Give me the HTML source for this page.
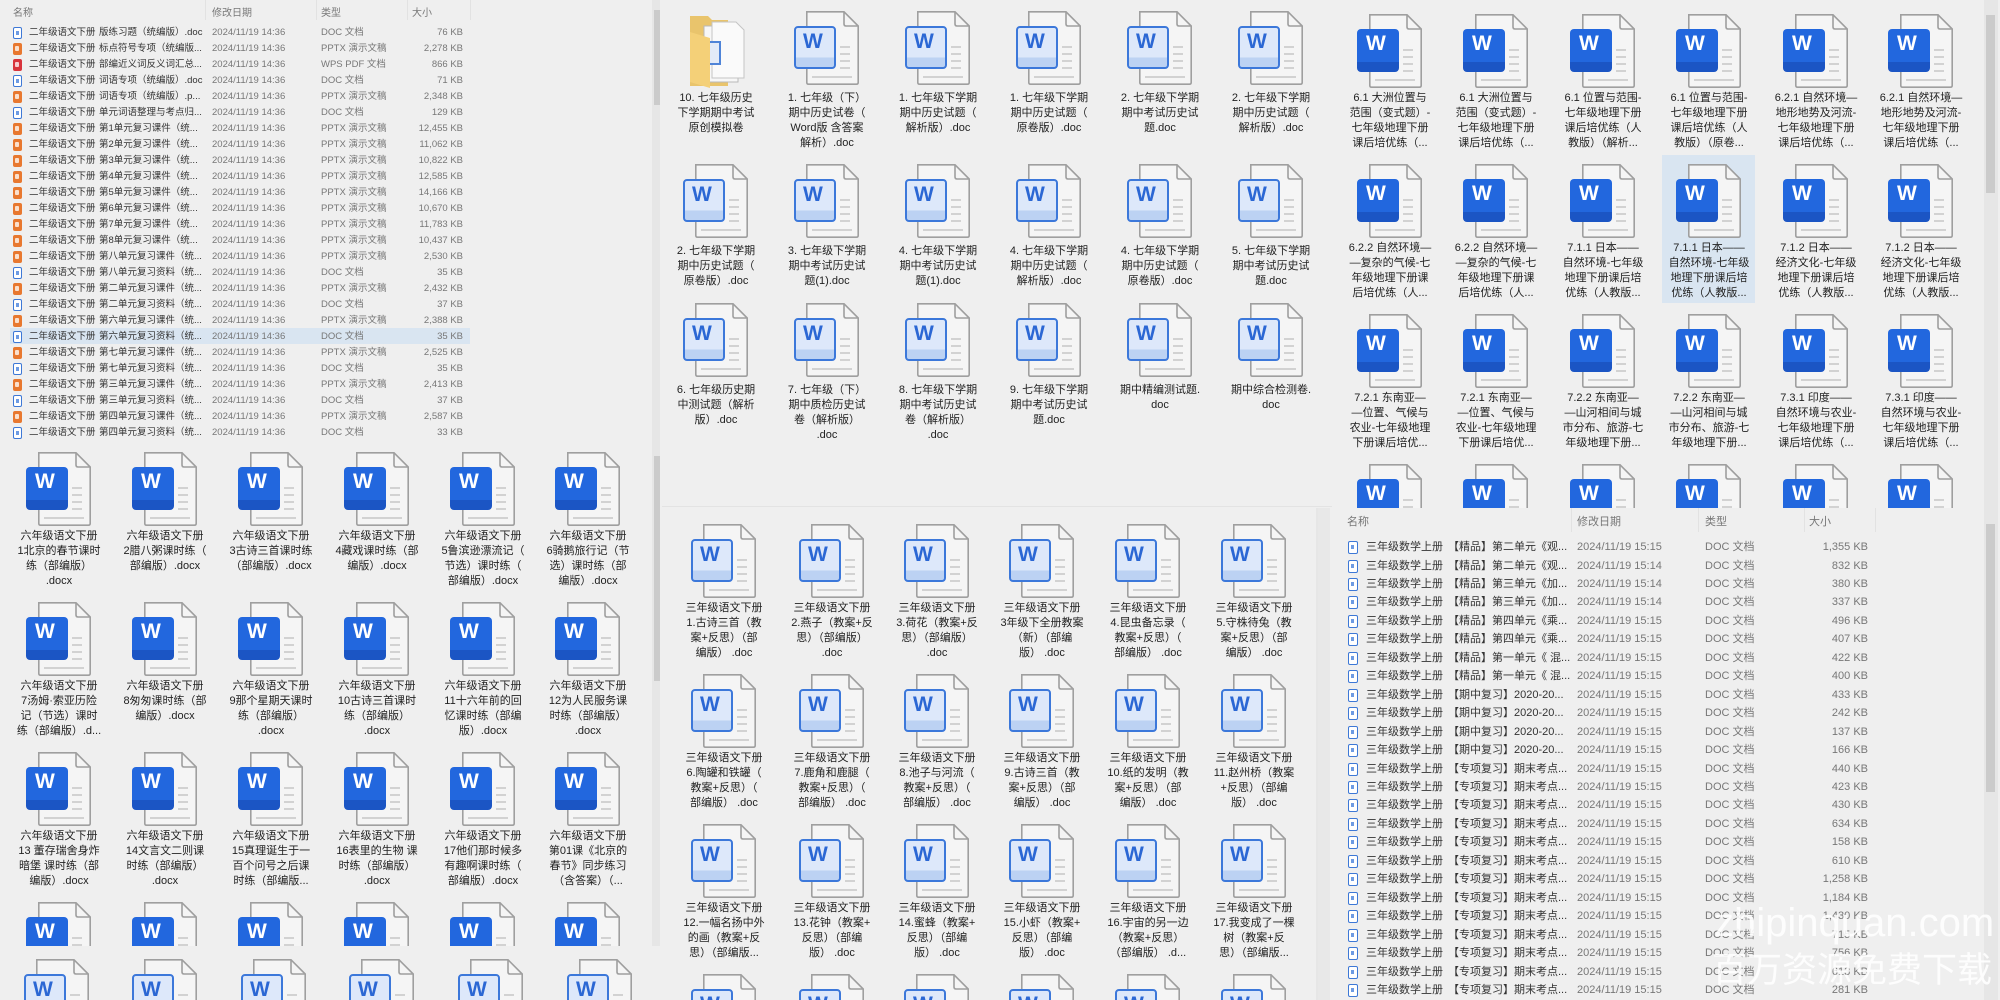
<!DOCTYPE html>
<html><head><meta charset="utf-8">
<style>
*{margin:0;padding:0;box-sizing:border-box}
html{width:2000px;height:1000px;overflow:hidden}
body{width:2000px;height:1000px;overflow:hidden;background:#efefef;position:relative;font-family:"Liberation Sans","Noto Sans CJK SC",sans-serif}
.p{position:absolute;overflow:hidden;background:#efefef}
.t{position:absolute;width:110px;height:140px}
.ic{position:absolute;left:22px;top:0;width:66px;height:76px}
.ic svg{position:absolute;left:0;top:0}
.bx{position:absolute;left:0;top:16px;width:42px;height:43px;border-radius:4px;background:linear-gradient(#2267de 0 77%,#1b55c4 77%);color:#fff;font:bold 21px/30px "Liberation Sans",sans-serif;padding-left:9px}
.bo .bx{background:linear-gradient(#dde8fa 0 76%,#bcd2f3 76%);border:2.5px solid #3c78da;color:#2b67d4;padding-left:7px;line-height:27px}
.lb{position:absolute;top:78px;left:-5px;width:120px;text-align:center;font-size:11px;line-height:15px;color:#222;white-space:nowrap;font-family:"Liberation Sans","Noto Sans CJK SC",sans-serif}
.sel{position:absolute;background:#d9e5f1}
.r{position:absolute;left:0;height:16px;width:660px;font-size:9.5px;line-height:16px;white-space:nowrap;color:#333}
.r span{position:absolute;top:0}
.r .d,.r .y{color:#777}
.r .s{text-align:right;color:#777}
.i{position:absolute;width:9px;height:12px;border-radius:2px}
.idoc{border:1px solid #3d78d6;background:#fff}
.idoc:after{content:"";position:absolute;left:2px;top:3px;width:3px;height:4px;background:#6d9be3}
.ippt{background:#e8782f}
.ippt:after{content:"";position:absolute;left:2px;top:3px;width:4px;height:5px;background:#fbe0cc;border-radius:1px}
.ipdf{background:#d8343c}
.ipdf:after{content:"";position:absolute;left:2px;top:3px;width:4px;height:5px;background:#f7cdd0;border-radius:1px}
.h{position:absolute;font-size:10px;color:#777}
.vs{position:absolute;width:1px;background:#e2e2e2}
.sb{position:absolute;background:#e6e6e6}
.th{position:absolute;background:#cbcbcb}
.r2{position:absolute;left:0;width:640px;height:18px;font-size:11px;line-height:18px;white-space:nowrap;color:#333}
.r2 span{position:absolute;top:0}
.r2 .d,.r2 .y,.r2 .s{color:#777}
.r2 .s{text-align:right}
</style></head><body>
<svg width="0" height="0" style="position:absolute">
<defs>
<symbol id="pg" viewBox="0 0 66 76">
<path d="M12.8 1.8H50L64.2 16V72.5Q64.2 74.2 62.5 74.2H14.5Q12.8 74.2 12.8 72.5Z" fill="#f5f5f5" stroke="#9f9f9f" stroke-width="1.6"/>
<path d="M50 1.8V14Q50 16 52 16H64.2" fill="none" stroke="#9f9f9f" stroke-width="1.6"/>
<rect x="46" y="36" width="10" height="2" fill="#d2d2d2"/>
<rect x="46" y="43" width="10" height="2" fill="#d2d2d2"/>
<rect x="46" y="50" width="10" height="2" fill="#d2d2d2"/>
<rect x="46" y="57" width="10" height="2" fill="#d2d2d2"/>
<rect x="18" y="66" width="40" height="2" fill="#d2d2d2"/>
</symbol>
</defs>
</svg>

<!-- ============ TOP-LEFT LIST ============ -->
<div class="p" style="left:0;top:0;width:660px;height:442px">
<div class="h" style="left:13px;top:4px">名称</div>
<div class="h" style="left:107px;top:-6px;font-size:9px">^</div>
<div class="h" style="left:212px;top:4px">修改日期</div>
<div class="h" style="left:321px;top:4px">类型</div>
<div class="h" style="left:412px;top:4px">大小</div>
<div class="vs" style="left:205px;top:0;height:20px"></div>
<div class="vs" style="left:316px;top:0;height:20px"></div>
<div class="vs" style="left:407px;top:0;height:20px"></div>
<div class="vs" style="left:470px;top:0;height:20px"></div>
<div class="sel" style="left:10px;top:328px;width:460px;height:16px"></div>
<div class="r" style="top:25px"><i class="i idoc" style="left:13px;top:2px"></i><span style="left:29px">二年级语文下册</span><span style="left:99px">版练习题（统编版）.doc</span><span class="d" style="left:212px">2024/11/19 14:36</span><span class="y" style="left:321px">DOC 文档</span><span class="s" style="left:400px;width:63px">76 KB</span></div>
<div class="r" style="top:41px"><i class="i ippt" style="left:13px;top:2px"></i><span style="left:29px">二年级语文下册</span><span style="left:99px">标点符号专项（统编版...</span><span class="d" style="left:212px">2024/11/19 14:36</span><span class="y" style="left:321px">PPTX 演示文稿</span><span class="s" style="left:400px;width:63px">2,278 KB</span></div>
<div class="r" style="top:57px"><i class="i ipdf" style="left:13px;top:2px"></i><span style="left:29px">二年级语文下册</span><span style="left:99px">部编近义词反义词汇总...</span><span class="d" style="left:212px">2024/11/19 14:36</span><span class="y" style="left:321px">WPS PDF 文档</span><span class="s" style="left:400px;width:63px">866 KB</span></div>
<div class="r" style="top:73px"><i class="i idoc" style="left:13px;top:2px"></i><span style="left:29px">二年级语文下册</span><span style="left:99px">词语专项（统编版）.doc</span><span class="d" style="left:212px">2024/11/19 14:36</span><span class="y" style="left:321px">DOC 文档</span><span class="s" style="left:400px;width:63px">71 KB</span></div>
<div class="r" style="top:89px"><i class="i ippt" style="left:13px;top:2px"></i><span style="left:29px">二年级语文下册</span><span style="left:99px">词语专项（统编版）.p...</span><span class="d" style="left:212px">2024/11/19 14:36</span><span class="y" style="left:321px">PPTX 演示文稿</span><span class="s" style="left:400px;width:63px">2,348 KB</span></div>
<div class="r" style="top:105px"><i class="i idoc" style="left:13px;top:2px"></i><span style="left:29px">二年级语文下册</span><span style="left:99px">单元词语整理与考点归...</span><span class="d" style="left:212px">2024/11/19 14:36</span><span class="y" style="left:321px">DOC 文档</span><span class="s" style="left:400px;width:63px">129 KB</span></div>
<div class="r" style="top:121px"><i class="i ippt" style="left:13px;top:2px"></i><span style="left:29px">二年级语文下册</span><span style="left:99px">第1单元复习课件（统...</span><span class="d" style="left:212px">2024/11/19 14:36</span><span class="y" style="left:321px">PPTX 演示文稿</span><span class="s" style="left:400px;width:63px">12,455 KB</span></div>
<div class="r" style="top:137px"><i class="i ippt" style="left:13px;top:2px"></i><span style="left:29px">二年级语文下册</span><span style="left:99px">第2单元复习课件（统...</span><span class="d" style="left:212px">2024/11/19 14:36</span><span class="y" style="left:321px">PPTX 演示文稿</span><span class="s" style="left:400px;width:63px">11,062 KB</span></div>
<div class="r" style="top:153px"><i class="i ippt" style="left:13px;top:2px"></i><span style="left:29px">二年级语文下册</span><span style="left:99px">第3单元复习课件（统...</span><span class="d" style="left:212px">2024/11/19 14:36</span><span class="y" style="left:321px">PPTX 演示文稿</span><span class="s" style="left:400px;width:63px">10,822 KB</span></div>
<div class="r" style="top:169px"><i class="i ippt" style="left:13px;top:2px"></i><span style="left:29px">二年级语文下册</span><span style="left:99px">第4单元复习课件（统...</span><span class="d" style="left:212px">2024/11/19 14:36</span><span class="y" style="left:321px">PPTX 演示文稿</span><span class="s" style="left:400px;width:63px">12,585 KB</span></div>
<div class="r" style="top:185px"><i class="i ippt" style="left:13px;top:2px"></i><span style="left:29px">二年级语文下册</span><span style="left:99px">第5单元复习课件（统...</span><span class="d" style="left:212px">2024/11/19 14:36</span><span class="y" style="left:321px">PPTX 演示文稿</span><span class="s" style="left:400px;width:63px">14,166 KB</span></div>
<div class="r" style="top:201px"><i class="i ippt" style="left:13px;top:2px"></i><span style="left:29px">二年级语文下册</span><span style="left:99px">第6单元复习课件（统...</span><span class="d" style="left:212px">2024/11/19 14:36</span><span class="y" style="left:321px">PPTX 演示文稿</span><span class="s" style="left:400px;width:63px">10,670 KB</span></div>
<div class="r" style="top:217px"><i class="i ippt" style="left:13px;top:2px"></i><span style="left:29px">二年级语文下册</span><span style="left:99px">第7单元复习课件（统...</span><span class="d" style="left:212px">2024/11/19 14:36</span><span class="y" style="left:321px">PPTX 演示文稿</span><span class="s" style="left:400px;width:63px">11,783 KB</span></div>
<div class="r" style="top:233px"><i class="i ippt" style="left:13px;top:2px"></i><span style="left:29px">二年级语文下册</span><span style="left:99px">第8单元复习课件（统...</span><span class="d" style="left:212px">2024/11/19 14:36</span><span class="y" style="left:321px">PPTX 演示文稿</span><span class="s" style="left:400px;width:63px">10,437 KB</span></div>
<div class="r" style="top:249px"><i class="i ippt" style="left:13px;top:2px"></i><span style="left:29px">二年级语文下册</span><span style="left:99px">第八单元复习课件（统...</span><span class="d" style="left:212px">2024/11/19 14:36</span><span class="y" style="left:321px">PPTX 演示文稿</span><span class="s" style="left:400px;width:63px">2,530 KB</span></div>
<div class="r" style="top:265px"><i class="i idoc" style="left:13px;top:2px"></i><span style="left:29px">二年级语文下册</span><span style="left:99px">第八单元复习资料（统...</span><span class="d" style="left:212px">2024/11/19 14:36</span><span class="y" style="left:321px">DOC 文档</span><span class="s" style="left:400px;width:63px">35 KB</span></div>
<div class="r" style="top:281px"><i class="i ippt" style="left:13px;top:2px"></i><span style="left:29px">二年级语文下册</span><span style="left:99px">第二单元复习课件（统...</span><span class="d" style="left:212px">2024/11/19 14:36</span><span class="y" style="left:321px">PPTX 演示文稿</span><span class="s" style="left:400px;width:63px">2,432 KB</span></div>
<div class="r" style="top:297px"><i class="i idoc" style="left:13px;top:2px"></i><span style="left:29px">二年级语文下册</span><span style="left:99px">第二单元复习资料（统...</span><span class="d" style="left:212px">2024/11/19 14:36</span><span class="y" style="left:321px">DOC 文档</span><span class="s" style="left:400px;width:63px">37 KB</span></div>
<div class="r" style="top:313px"><i class="i ippt" style="left:13px;top:2px"></i><span style="left:29px">二年级语文下册</span><span style="left:99px">第六单元复习课件（统...</span><span class="d" style="left:212px">2024/11/19 14:36</span><span class="y" style="left:321px">PPTX 演示文稿</span><span class="s" style="left:400px;width:63px">2,388 KB</span></div>
<div class="r" style="top:329px"><i class="i idoc" style="left:13px;top:2px"></i><span style="left:29px">二年级语文下册</span><span style="left:99px">第六单元复习资料（统...</span><span class="d" style="left:212px">2024/11/19 14:36</span><span class="y" style="left:321px">DOC 文档</span><span class="s" style="left:400px;width:63px">35 KB</span></div>
<div class="r" style="top:345px"><i class="i ippt" style="left:13px;top:2px"></i><span style="left:29px">二年级语文下册</span><span style="left:99px">第七单元复习课件（统...</span><span class="d" style="left:212px">2024/11/19 14:36</span><span class="y" style="left:321px">PPTX 演示文稿</span><span class="s" style="left:400px;width:63px">2,525 KB</span></div>
<div class="r" style="top:361px"><i class="i idoc" style="left:13px;top:2px"></i><span style="left:29px">二年级语文下册</span><span style="left:99px">第七单元复习资料（统...</span><span class="d" style="left:212px">2024/11/19 14:36</span><span class="y" style="left:321px">DOC 文档</span><span class="s" style="left:400px;width:63px">35 KB</span></div>
<div class="r" style="top:377px"><i class="i ippt" style="left:13px;top:2px"></i><span style="left:29px">二年级语文下册</span><span style="left:99px">第三单元复习课件（统...</span><span class="d" style="left:212px">2024/11/19 14:36</span><span class="y" style="left:321px">PPTX 演示文稿</span><span class="s" style="left:400px;width:63px">2,413 KB</span></div>
<div class="r" style="top:393px"><i class="i idoc" style="left:13px;top:2px"></i><span style="left:29px">二年级语文下册</span><span style="left:99px">第三单元复习资料（统...</span><span class="d" style="left:212px">2024/11/19 14:36</span><span class="y" style="left:321px">DOC 文档</span><span class="s" style="left:400px;width:63px">37 KB</span></div>
<div class="r" style="top:409px"><i class="i ippt" style="left:13px;top:2px"></i><span style="left:29px">二年级语文下册</span><span style="left:99px">第四单元复习课件（统...</span><span class="d" style="left:212px">2024/11/19 14:36</span><span class="y" style="left:321px">PPTX 演示文稿</span><span class="s" style="left:400px;width:63px">2,587 KB</span></div>
<div class="r" style="top:425px"><i class="i idoc" style="left:13px;top:2px"></i><span style="left:29px">二年级语文下册</span><span style="left:99px">第四单元复习资料（统...</span><span class="d" style="left:212px">2024/11/19 14:36</span><span class="y" style="left:321px">DOC 文档</span><span class="s" style="left:400px;width:63px">33 KB</span></div>
<div class="sb" style="left:652px;top:0;width:10px;height:442px"></div>
<div class="th" style="left:654px;top:10px;width:6px;height:95px"></div>
</div>

<!-- ============ BOTTOM-LEFT ICONS ============ -->
<div class="p" style="left:0;top:442px;width:660px;height:504px">
<div class="t" style="left:4px;top:9px"><div class="ic"><svg width="66" height="76"><use href="#pg"/></svg><div class="bx">W</div></div><div class="lb">六年级语文下册<br>1北京的春节课时<br>练（部编版）<br>.docx</div></div>
<div class="t" style="left:110px;top:9px"><div class="ic"><svg width="66" height="76"><use href="#pg"/></svg><div class="bx">W</div></div><div class="lb">六年级语文下册<br>2腊八粥课时练（<br>部编版）.docx</div></div>
<div class="t" style="left:216px;top:9px"><div class="ic"><svg width="66" height="76"><use href="#pg"/></svg><div class="bx">W</div></div><div class="lb">六年级语文下册<br>3古诗三首课时练<br>（部编版）.docx</div></div>
<div class="t" style="left:322px;top:9px"><div class="ic"><svg width="66" height="76"><use href="#pg"/></svg><div class="bx">W</div></div><div class="lb">六年级语文下册<br>4藏戏课时练（部<br>编版）.docx</div></div>
<div class="t" style="left:428px;top:9px"><div class="ic"><svg width="66" height="76"><use href="#pg"/></svg><div class="bx">W</div></div><div class="lb">六年级语文下册<br>5鲁滨逊漂流记（<br>节选）课时练（<br>部编版）.docx</div></div>
<div class="t" style="left:533px;top:9px"><div class="ic"><svg width="66" height="76"><use href="#pg"/></svg><div class="bx">W</div></div><div class="lb">六年级语文下册<br>6骑鹅旅行记（节<br>选）课时练（部<br>编版）.docx</div></div>

<div class="t" style="left:4px;top:159px"><div class="ic"><svg width="66" height="76"><use href="#pg"/></svg><div class="bx">W</div></div><div class="lb">六年级语文下册<br>7汤姆·索亚历险<br>记（节选）课时<br>练（部编版）.d...</div></div>
<div class="t" style="left:110px;top:159px"><div class="ic"><svg width="66" height="76"><use href="#pg"/></svg><div class="bx">W</div></div><div class="lb">六年级语文下册<br>8匆匆课时练（部<br>编版）.docx</div></div>
<div class="t" style="left:216px;top:159px"><div class="ic"><svg width="66" height="76"><use href="#pg"/></svg><div class="bx">W</div></div><div class="lb">六年级语文下册<br>9那个星期天课时<br>练（部编版）<br>.docx</div></div>
<div class="t" style="left:322px;top:159px"><div class="ic"><svg width="66" height="76"><use href="#pg"/></svg><div class="bx">W</div></div><div class="lb">六年级语文下册<br>10古诗三首课时<br>练（部编版）<br>.docx</div></div>
<div class="t" style="left:428px;top:159px"><div class="ic"><svg width="66" height="76"><use href="#pg"/></svg><div class="bx">W</div></div><div class="lb">六年级语文下册<br>11十六年前的回<br>忆课时练（部编<br>版）.docx</div></div>
<div class="t" style="left:533px;top:159px"><div class="ic"><svg width="66" height="76"><use href="#pg"/></svg><div class="bx">W</div></div><div class="lb">六年级语文下册<br>12为人民服务课<br>时练（部编版）<br>.docx</div></div>

<div class="t" style="left:4px;top:309px"><div class="ic"><svg width="66" height="76"><use href="#pg"/></svg><div class="bx">W</div></div><div class="lb">六年级语文下册<br>13 董存瑞舍身炸<br>暗堡 课时练（部<br>编版）.docx</div></div>
<div class="t" style="left:110px;top:309px"><div class="ic"><svg width="66" height="76"><use href="#pg"/></svg><div class="bx">W</div></div><div class="lb">六年级语文下册<br>14文言文二则课<br>时练（部编版）<br>.docx</div></div>
<div class="t" style="left:216px;top:309px"><div class="ic"><svg width="66" height="76"><use href="#pg"/></svg><div class="bx">W</div></div><div class="lb">六年级语文下册<br>15真理诞生于一<br>百个问号之后课<br>时练（部编版...</div></div>
<div class="t" style="left:322px;top:309px"><div class="ic"><svg width="66" height="76"><use href="#pg"/></svg><div class="bx">W</div></div><div class="lb">六年级语文下册<br>16表里的生物 课<br>时练（部编版）<br>.docx</div></div>
<div class="t" style="left:428px;top:309px"><div class="ic"><svg width="66" height="76"><use href="#pg"/></svg><div class="bx">W</div></div><div class="lb">六年级语文下册<br>17他们那时候多<br>有趣啊课时练（<br>部编版）.docx</div></div>
<div class="t" style="left:533px;top:309px"><div class="ic"><svg width="66" height="76"><use href="#pg"/></svg><div class="bx">W</div></div><div class="lb">六年级语文下册<br>第01课《北京的<br>春节》同步练习<br>（含答案）（...</div></div>

<div class="t" style="left:4px;top:459px;height:45px"><div class="ic"><svg width="66" height="76"><use href="#pg"/></svg><div class="bx">W</div></div></div>
<div class="t" style="left:110px;top:459px;height:45px"><div class="ic"><svg width="66" height="76"><use href="#pg"/></svg><div class="bx">W</div></div></div>
<div class="t" style="left:216px;top:459px;height:45px"><div class="ic"><svg width="66" height="76"><use href="#pg"/></svg><div class="bx">W</div></div></div>
<div class="t" style="left:322px;top:459px;height:45px"><div class="ic"><svg width="66" height="76"><use href="#pg"/></svg><div class="bx">W</div></div></div>
<div class="t" style="left:428px;top:459px;height:45px"><div class="ic"><svg width="66" height="76"><use href="#pg"/></svg><div class="bx">W</div></div></div>
<div class="t" style="left:533px;top:459px;height:45px"><div class="ic"><svg width="66" height="76"><use href="#pg"/></svg><div class="bx">W</div></div></div>
<div class="sb" style="left:652px;top:0;width:10px;height:504px"></div>
<div class="th" style="left:654px;top:14px;width:6px;height:225px"></div>
</div>
<div class="p" style="left:0;top:946px;width:660px;height:54px">
<div class="t bo" style="left:2px;top:12px;height:42px"><div class="ic"><svg width="66" height="76"><use href="#pg"/></svg><div class="bx">W</div></div></div>
<div class="t bo" style="left:110px;top:12px;height:42px"><div class="ic"><svg width="66" height="76"><use href="#pg"/></svg><div class="bx">W</div></div></div>
<div class="t bo" style="left:219px;top:12px;height:42px"><div class="ic"><svg width="66" height="76"><use href="#pg"/></svg><div class="bx">W</div></div></div>
<div class="t bo" style="left:327px;top:12px;height:42px"><div class="ic"><svg width="66" height="76"><use href="#pg"/></svg><div class="bx">W</div></div></div>
<div class="t bo" style="left:436px;top:12px;height:42px"><div class="ic"><svg width="66" height="76"><use href="#pg"/></svg><div class="bx">W</div></div></div>
<div class="t bo" style="left:545px;top:12px;height:42px"><div class="ic"><svg width="66" height="76"><use href="#pg"/></svg><div class="bx">W</div></div></div>
</div>

<!-- ============ TOP-MIDDLE ============ -->
<div class="p" style="left:662px;top:0;width:670px;height:507px;border-bottom:1px solid #e3e3e3">
<div class="t" style="left:-1px;top:10px">
 <svg style="position:absolute;left:27px;top:2px" width="60" height="76" viewBox="0 0 60 76">
  <path d="M2 4H20L24 8H40V74H2Z" fill="#e9c46c"/>
  <path d="M16 14H42L50 22V70H16Z" fill="#f7f7f7" stroke="#b9b9b9"/>
  <path d="M24 10H48L56 18V66H24Z" fill="#fafafa" stroke="#c4c4c4"/>
  <rect x="18" y="30" width="14" height="22" fill="#e3ebf8" stroke="#4f84d8" stroke-width="2"/>
  <path d="M2 20L22 26V76L2 70Z" fill="#f4d078"/>
 </svg>
 <div class="lb" style="top:81px">10. 七年级历史<br>下学期期中考试<br>原创模拟卷</div></div>
<div class="t bo" style="left:110px;top:10px"><div class="ic"><svg width="66" height="76"><use href="#pg"/></svg><div class="bx">W</div></div><div class="lb" style="top:81px">1. 七年级（下）<br>期中历史试卷（<br>Word版 含答案<br>解析）.doc</div></div>
<div class="t bo" style="left:221px;top:10px"><div class="ic"><svg width="66" height="76"><use href="#pg"/></svg><div class="bx">W</div></div><div class="lb" style="top:81px">1. 七年级下学期<br>期中历史试题（<br>解析版）.doc</div></div>
<div class="t bo" style="left:332px;top:10px"><div class="ic"><svg width="66" height="76"><use href="#pg"/></svg><div class="bx">W</div></div><div class="lb" style="top:81px">1. 七年级下学期<br>期中历史试题（<br>原卷版）.doc</div></div>
<div class="t bo" style="left:443px;top:10px"><div class="ic"><svg width="66" height="76"><use href="#pg"/></svg><div class="bx">W</div></div><div class="lb" style="top:81px">2. 七年级下学期<br>期中考试历史试<br>题.doc</div></div>
<div class="t bo" style="left:554px;top:10px"><div class="ic"><svg width="66" height="76"><use href="#pg"/></svg><div class="bx">W</div></div><div class="lb" style="top:81px">2. 七年级下学期<br>期中历史试题（<br>解析版）.doc</div></div>

<div class="t bo" style="left:-1px;top:163px"><div class="ic"><svg width="66" height="76"><use href="#pg"/></svg><div class="bx">W</div></div><div class="lb" style="top:81px">2. 七年级下学期<br>期中历史试题（<br>原卷版）.doc</div></div>
<div class="t bo" style="left:110px;top:163px"><div class="ic"><svg width="66" height="76"><use href="#pg"/></svg><div class="bx">W</div></div><div class="lb" style="top:81px">3. 七年级下学期<br>期中考试历史试<br>题(1).doc</div></div>
<div class="t bo" style="left:221px;top:163px"><div class="ic"><svg width="66" height="76"><use href="#pg"/></svg><div class="bx">W</div></div><div class="lb" style="top:81px">4. 七年级下学期<br>期中考试历史试<br>题(1).doc</div></div>
<div class="t bo" style="left:332px;top:163px"><div class="ic"><svg width="66" height="76"><use href="#pg"/></svg><div class="bx">W</div></div><div class="lb" style="top:81px">4. 七年级下学期<br>期中历史试题（<br>解析版）.doc</div></div>
<div class="t bo" style="left:443px;top:163px"><div class="ic"><svg width="66" height="76"><use href="#pg"/></svg><div class="bx">W</div></div><div class="lb" style="top:81px">4. 七年级下学期<br>期中历史试题（<br>原卷版）.doc</div></div>
<div class="t bo" style="left:554px;top:163px"><div class="ic"><svg width="66" height="76"><use href="#pg"/></svg><div class="bx">W</div></div><div class="lb" style="top:81px">5. 七年级下学期<br>期中考试历史试<br>题.doc</div></div>

<div class="t bo" style="left:-1px;top:302px"><div class="ic"><svg width="66" height="76"><use href="#pg"/></svg><div class="bx">W</div></div><div class="lb" style="top:81px">6. 七年级历史期<br>中测试题（解析<br>版）.doc</div></div>
<div class="t bo" style="left:110px;top:302px"><div class="ic"><svg width="66" height="76"><use href="#pg"/></svg><div class="bx">W</div></div><div class="lb" style="top:81px">7. 七年级（下）<br>期中质检历史试<br>卷（解析版）<br>.doc</div></div>
<div class="t bo" style="left:221px;top:302px"><div class="ic"><svg width="66" height="76"><use href="#pg"/></svg><div class="bx">W</div></div><div class="lb" style="top:81px">8. 七年级下学期<br>期中考试历史试<br>卷（解析版）<br>.doc</div></div>
<div class="t bo" style="left:332px;top:302px"><div class="ic"><svg width="66" height="76"><use href="#pg"/></svg><div class="bx">W</div></div><div class="lb" style="top:81px">9. 七年级下学期<br>期中考试历史试<br>题.doc</div></div>
<div class="t bo" style="left:443px;top:302px"><div class="ic"><svg width="66" height="76"><use href="#pg"/></svg><div class="bx">W</div></div><div class="lb" style="top:81px">期中精编测试题.<br>doc</div></div>
<div class="t bo" style="left:554px;top:302px"><div class="ic"><svg width="66" height="76"><use href="#pg"/></svg><div class="bx">W</div></div><div class="lb" style="top:81px">期中综合检测卷.<br>doc</div></div>
</div>

<!-- ============ BOTTOM-MIDDLE ============ -->
<div class="p" style="left:662px;top:508px;width:668px;height:492px">
<div class="t bo" style="left:7px;top:15px"><div class="ic"><svg width="66" height="76"><use href="#pg"/></svg><div class="bx">W</div></div><div class="lb">三年级语文下册<br>1.古诗三首（教<br>案+反思）（部<br>编版） .doc</div></div>
<div class="t bo" style="left:115px;top:15px"><div class="ic"><svg width="66" height="76"><use href="#pg"/></svg><div class="bx">W</div></div><div class="lb">三年级语文下册<br>2.燕子（教案+反<br>思）（部编版）<br>.doc</div></div>
<div class="t bo" style="left:220px;top:15px"><div class="ic"><svg width="66" height="76"><use href="#pg"/></svg><div class="bx">W</div></div><div class="lb">三年级语文下册<br>3.荷花（教案+反<br>思）（部编版）<br>.doc</div></div>
<div class="t bo" style="left:325px;top:15px"><div class="ic"><svg width="66" height="76"><use href="#pg"/></svg><div class="bx">W</div></div><div class="lb">三年级语文下册<br>3年级下全册教案<br>（新）（部编<br>版） .doc</div></div>
<div class="t bo" style="left:431px;top:15px"><div class="ic"><svg width="66" height="76"><use href="#pg"/></svg><div class="bx">W</div></div><div class="lb">三年级语文下册<br>4.昆虫备忘录（<br>教案+反思）（<br>部编版） .doc</div></div>
<div class="t bo" style="left:537px;top:15px"><div class="ic"><svg width="66" height="76"><use href="#pg"/></svg><div class="bx">W</div></div><div class="lb">三年级语文下册<br>5.守株待兔（教<br>案+反思）（部<br>编版） .doc</div></div>

<div class="t bo" style="left:7px;top:165px"><div class="ic"><svg width="66" height="76"><use href="#pg"/></svg><div class="bx">W</div></div><div class="lb">三年级语文下册<br>6.陶罐和铁罐（<br>教案+反思）（<br>部编版） .doc</div></div>
<div class="t bo" style="left:115px;top:165px"><div class="ic"><svg width="66" height="76"><use href="#pg"/></svg><div class="bx">W</div></div><div class="lb">三年级语文下册<br>7.鹿角和鹿腿（<br>教案+反思）（<br>部编版） .doc</div></div>
<div class="t bo" style="left:220px;top:165px"><div class="ic"><svg width="66" height="76"><use href="#pg"/></svg><div class="bx">W</div></div><div class="lb">三年级语文下册<br>8.池子与河流（<br>教案+反思）（<br>部编版） .doc</div></div>
<div class="t bo" style="left:325px;top:165px"><div class="ic"><svg width="66" height="76"><use href="#pg"/></svg><div class="bx">W</div></div><div class="lb">三年级语文下册<br>9.古诗三首（教<br>案+反思）（部<br>编版） .doc</div></div>
<div class="t bo" style="left:431px;top:165px"><div class="ic"><svg width="66" height="76"><use href="#pg"/></svg><div class="bx">W</div></div><div class="lb">三年级语文下册<br>10.纸的发明（教<br>案+反思）（部<br>编版） .doc</div></div>
<div class="t bo" style="left:537px;top:165px"><div class="ic"><svg width="66" height="76"><use href="#pg"/></svg><div class="bx">W</div></div><div class="lb">三年级语文下册<br>11.赵州桥（教案<br>+反思）（部编<br>版） .doc</div></div>

<div class="t bo" style="left:7px;top:315px"><div class="ic"><svg width="66" height="76"><use href="#pg"/></svg><div class="bx">W</div></div><div class="lb">三年级语文下册<br>12.一幅名扬中外<br>的画（教案+反<br>思）（部编版...</div></div>
<div class="t bo" style="left:115px;top:315px"><div class="ic"><svg width="66" height="76"><use href="#pg"/></svg><div class="bx">W</div></div><div class="lb">三年级语文下册<br>13.花钟（教案+<br>反思）（部编<br>版） .doc</div></div>
<div class="t bo" style="left:220px;top:315px"><div class="ic"><svg width="66" height="76"><use href="#pg"/></svg><div class="bx">W</div></div><div class="lb">三年级语文下册<br>14.蜜蜂（教案+<br>反思）（部编<br>版） .doc</div></div>
<div class="t bo" style="left:325px;top:315px"><div class="ic"><svg width="66" height="76"><use href="#pg"/></svg><div class="bx">W</div></div><div class="lb">三年级语文下册<br>15.小虾（教案+<br>反思）（部编<br>版） .doc</div></div>
<div class="t bo" style="left:431px;top:315px"><div class="ic"><svg width="66" height="76"><use href="#pg"/></svg><div class="bx">W</div></div><div class="lb">三年级语文下册<br>16.宇宙的另一边<br>（教案+反思）<br>（部编版） .d...</div></div>
<div class="t bo" style="left:537px;top:315px"><div class="ic"><svg width="66" height="76"><use href="#pg"/></svg><div class="bx">W</div></div><div class="lb">三年级语文下册<br>17.我变成了一棵<br>树（教案+反<br>思）（部编版...</div></div>

<div class="t bo" style="left:7px;top:465px;height:27px"><div class="ic"><svg width="66" height="76"><use href="#pg"/></svg><div class="bx">W</div></div></div>
<div class="t bo" style="left:115px;top:465px;height:27px"><div class="ic"><svg width="66" height="76"><use href="#pg"/></svg><div class="bx">W</div></div></div>
<div class="t bo" style="left:220px;top:465px;height:27px"><div class="ic"><svg width="66" height="76"><use href="#pg"/></svg><div class="bx">W</div></div></div>
<div class="t bo" style="left:325px;top:465px;height:27px"><div class="ic"><svg width="66" height="76"><use href="#pg"/></svg><div class="bx">W</div></div></div>
<div class="t bo" style="left:431px;top:465px;height:27px"><div class="ic"><svg width="66" height="76"><use href="#pg"/></svg><div class="bx">W</div></div></div>
<div class="t bo" style="left:537px;top:465px;height:27px"><div class="ic"><svg width="66" height="76"><use href="#pg"/></svg><div class="bx">W</div></div></div>
<div class="sb" style="left:654px;top:0;width:12px;height:492px"></div>
<div class="th" style="left:656px;top:18px;width:8px;height:265px"></div>
</div>

<!-- ============ TOP-RIGHT ============ -->
<div class="p" style="left:1332px;top:0;width:668px;height:508px">
<div class="sel" style="left:330px;top:155px;width:93px;height:148px"></div>
<div class="t" style="left:3px;top:13px"><div class="ic"><svg width="66" height="76"><use href="#pg"/></svg><div class="bx">W</div></div><div class="lb">6.1 大洲位置与<br>范围（变式题）-<br>七年级地理下册<br>课后培优练（...</div></div>
<div class="t" style="left:109px;top:13px"><div class="ic"><svg width="66" height="76"><use href="#pg"/></svg><div class="bx">W</div></div><div class="lb">6.1 大洲位置与<br>范围（变式题）-<br>七年级地理下册<br>课后培优练（...</div></div>
<div class="t" style="left:216px;top:13px"><div class="ic"><svg width="66" height="76"><use href="#pg"/></svg><div class="bx">W</div></div><div class="lb">6.1 位置与范围-<br>七年级地理下册<br>课后培优练（人<br>教版）（解析...</div></div>
<div class="t" style="left:322px;top:13px"><div class="ic"><svg width="66" height="76"><use href="#pg"/></svg><div class="bx">W</div></div><div class="lb">6.1 位置与范围-<br>七年级地理下册<br>课后培优练（人<br>教版）（原卷...</div></div>
<div class="t" style="left:429px;top:13px"><div class="ic"><svg width="66" height="76"><use href="#pg"/></svg><div class="bx">W</div></div><div class="lb">6.2.1 自然环境—<br>地形地势及河流-<br>七年级地理下册<br>课后培优练（...</div></div>
<div class="t" style="left:534px;top:13px"><div class="ic"><svg width="66" height="76"><use href="#pg"/></svg><div class="bx">W</div></div><div class="lb">6.2.1 自然环境—<br>地形地势及河流-<br>七年级地理下册<br>课后培优练（...</div></div>

<div class="t" style="left:3px;top:163px"><div class="ic"><svg width="66" height="76"><use href="#pg"/></svg><div class="bx">W</div></div><div class="lb">6.2.2 自然环境—<br>—复杂的气候-七<br>年级地理下册课<br>后培优练（人...</div></div>
<div class="t" style="left:109px;top:163px"><div class="ic"><svg width="66" height="76"><use href="#pg"/></svg><div class="bx">W</div></div><div class="lb">6.2.2 自然环境—<br>—复杂的气候-七<br>年级地理下册课<br>后培优练（人...</div></div>
<div class="t" style="left:216px;top:163px"><div class="ic"><svg width="66" height="76"><use href="#pg"/></svg><div class="bx">W</div></div><div class="lb">7.1.1 日本——<br>自然环境-七年级<br>地理下册课后培<br>优练（人教版...</div></div>
<div class="t" style="left:322px;top:163px"><div class="ic"><svg width="66" height="76"><use href="#pg"/></svg><div class="bx">W</div></div><div class="lb">7.1.1 日本——<br>自然环境-七年级<br>地理下册课后培<br>优练（人教版...</div></div>
<div class="t" style="left:429px;top:163px"><div class="ic"><svg width="66" height="76"><use href="#pg"/></svg><div class="bx">W</div></div><div class="lb">7.1.2 日本——<br>经济文化-七年级<br>地理下册课后培<br>优练（人教版...</div></div>
<div class="t" style="left:534px;top:163px"><div class="ic"><svg width="66" height="76"><use href="#pg"/></svg><div class="bx">W</div></div><div class="lb">7.1.2 日本——<br>经济文化-七年级<br>地理下册课后培<br>优练（人教版...</div></div>

<div class="t" style="left:3px;top:313px"><div class="ic"><svg width="66" height="76"><use href="#pg"/></svg><div class="bx">W</div></div><div class="lb">7.2.1 东南亚—<br>—位置、气候与<br>农业-七年级地理<br>下册课后培优...</div></div>
<div class="t" style="left:109px;top:313px"><div class="ic"><svg width="66" height="76"><use href="#pg"/></svg><div class="bx">W</div></div><div class="lb">7.2.1 东南亚—<br>—位置、气候与<br>农业-七年级地理<br>下册课后培优...</div></div>
<div class="t" style="left:216px;top:313px"><div class="ic"><svg width="66" height="76"><use href="#pg"/></svg><div class="bx">W</div></div><div class="lb">7.2.2 东南亚—<br>—山河相间与城<br>市分布、旅游-七<br>年级地理下册...</div></div>
<div class="t" style="left:322px;top:313px"><div class="ic"><svg width="66" height="76"><use href="#pg"/></svg><div class="bx">W</div></div><div class="lb">7.2.2 东南亚—<br>—山河相间与城<br>市分布、旅游-七<br>年级地理下册...</div></div>
<div class="t" style="left:429px;top:313px"><div class="ic"><svg width="66" height="76"><use href="#pg"/></svg><div class="bx">W</div></div><div class="lb">7.3.1 印度——<br>自然环境与农业-<br>七年级地理下册<br>课后培优练（...</div></div>
<div class="t" style="left:534px;top:313px"><div class="ic"><svg width="66" height="76"><use href="#pg"/></svg><div class="bx">W</div></div><div class="lb">7.3.1 印度——<br>自然环境与农业-<br>七年级地理下册<br>课后培优练（...</div></div>

<div class="t" style="left:3px;top:463px;height:45px"><div class="ic"><svg width="66" height="76"><use href="#pg"/></svg><div class="bx">W</div></div></div>
<div class="t" style="left:109px;top:463px;height:45px"><div class="ic"><svg width="66" height="76"><use href="#pg"/></svg><div class="bx">W</div></div></div>
<div class="t" style="left:216px;top:463px;height:45px"><div class="ic"><svg width="66" height="76"><use href="#pg"/></svg><div class="bx">W</div></div></div>
<div class="t" style="left:322px;top:463px;height:45px"><div class="ic"><svg width="66" height="76"><use href="#pg"/></svg><div class="bx">W</div></div></div>
<div class="t" style="left:429px;top:463px;height:45px"><div class="ic"><svg width="66" height="76"><use href="#pg"/></svg><div class="bx">W</div></div></div>
<div class="t" style="left:534px;top:463px;height:45px"><div class="ic"><svg width="66" height="76"><use href="#pg"/></svg><div class="bx">W</div></div></div>
<div class="sb" style="left:652px;top:0;width:14px;height:508px"></div>
<div class="th" style="left:654px;top:15px;width:9px;height:178px"></div>
</div>

<!-- ============ BOTTOM-RIGHT LIST ============ -->
<div class="p" style="left:1332px;top:508px;width:668px;height:492px">
<div class="h" style="left:15px;top:5px;font-size:11px">名称</div>
<div class="h" style="left:112px;top:-5px;font-size:9px">^</div>
<div class="h" style="left:245px;top:5px;font-size:11px">修改日期</div>
<div class="h" style="left:373px;top:5px;font-size:11px">类型</div>
<div class="h" style="left:477px;top:5px;font-size:11px">大小</div>
<div class="vs" style="left:239px;top:0;height:24px"></div>
<div class="vs" style="left:366px;top:0;height:24px"></div>
<div class="vs" style="left:472px;top:0;height:24px"></div>
<div class="vs" style="left:543px;top:0;height:24px"></div>
<div class="r2" style="top:30px"><i class="i idoc" style="left:16px;top:3px;width:10px;height:13px"></i><span style="left:34px">三年级数学上册</span><span style="left:116px">【精品】第二单元《观...</span><span class="d" style="left:245px">2024/11/19 15:15</span><span class="y" style="left:373px">DOC 文档</span><span class="s" style="left:460px;width:76px">1,355 KB</span></div>
<div class="r2" style="top:48.5px"><i class="i idoc" style="left:16px;top:3px;width:10px;height:13px"></i><span style="left:34px">三年级数学上册</span><span style="left:116px">【精品】第二单元《观...</span><span class="d" style="left:245px">2024/11/19 15:14</span><span class="y" style="left:373px">DOC 文档</span><span class="s" style="left:460px;width:76px">832 KB</span></div>
<div class="r2" style="top:67px"><i class="i idoc" style="left:16px;top:3px;width:10px;height:13px"></i><span style="left:34px">三年级数学上册</span><span style="left:116px">【精品】第三单元《加...</span><span class="d" style="left:245px">2024/11/19 15:14</span><span class="y" style="left:373px">DOC 文档</span><span class="s" style="left:460px;width:76px">380 KB</span></div>
<div class="r2" style="top:85.4px"><i class="i idoc" style="left:16px;top:3px;width:10px;height:13px"></i><span style="left:34px">三年级数学上册</span><span style="left:116px">【精品】第三单元《加...</span><span class="d" style="left:245px">2024/11/19 15:14</span><span class="y" style="left:373px">DOC 文档</span><span class="s" style="left:460px;width:76px">337 KB</span></div>
<div class="r2" style="top:103.8px"><i class="i idoc" style="left:16px;top:3px;width:10px;height:13px"></i><span style="left:34px">三年级数学上册</span><span style="left:116px">【精品】第四单元《乘...</span><span class="d" style="left:245px">2024/11/19 15:15</span><span class="y" style="left:373px">DOC 文档</span><span class="s" style="left:460px;width:76px">496 KB</span></div>
<div class="r2" style="top:122.3px"><i class="i idoc" style="left:16px;top:3px;width:10px;height:13px"></i><span style="left:34px">三年级数学上册</span><span style="left:116px">【精品】第四单元《乘...</span><span class="d" style="left:245px">2024/11/19 15:15</span><span class="y" style="left:373px">DOC 文档</span><span class="s" style="left:460px;width:76px">407 KB</span></div>
<div class="r2" style="top:140.8px"><i class="i idoc" style="left:16px;top:3px;width:10px;height:13px"></i><span style="left:34px">三年级数学上册</span><span style="left:116px">【精品】第一单元《 混...</span><span class="d" style="left:245px">2024/11/19 15:15</span><span class="y" style="left:373px">DOC 文档</span><span class="s" style="left:460px;width:76px">422 KB</span></div>
<div class="r2" style="top:159.2px"><i class="i idoc" style="left:16px;top:3px;width:10px;height:13px"></i><span style="left:34px">三年级数学上册</span><span style="left:116px">【精品】第一单元《 混...</span><span class="d" style="left:245px">2024/11/19 15:15</span><span class="y" style="left:373px">DOC 文档</span><span class="s" style="left:460px;width:76px">400 KB</span></div>
<div class="r2" style="top:177.7px"><i class="i idoc" style="left:16px;top:3px;width:10px;height:13px"></i><span style="left:34px">三年级数学上册</span><span style="left:116px">【期中复习】2020-20...</span><span class="d" style="left:245px">2024/11/19 15:15</span><span class="y" style="left:373px">DOC 文档</span><span class="s" style="left:460px;width:76px">433 KB</span></div>
<div class="r2" style="top:196.1px"><i class="i idoc" style="left:16px;top:3px;width:10px;height:13px"></i><span style="left:34px">三年级数学上册</span><span style="left:116px">【期中复习】2020-20...</span><span class="d" style="left:245px">2024/11/19 15:15</span><span class="y" style="left:373px">DOC 文档</span><span class="s" style="left:460px;width:76px">242 KB</span></div>
<div class="r2" style="top:214.6px"><i class="i idoc" style="left:16px;top:3px;width:10px;height:13px"></i><span style="left:34px">三年级数学上册</span><span style="left:116px">【期中复习】2020-20...</span><span class="d" style="left:245px">2024/11/19 15:15</span><span class="y" style="left:373px">DOC 文档</span><span class="s" style="left:460px;width:76px">137 KB</span></div>
<div class="r2" style="top:233px"><i class="i idoc" style="left:16px;top:3px;width:10px;height:13px"></i><span style="left:34px">三年级数学上册</span><span style="left:116px">【期中复习】2020-20...</span><span class="d" style="left:245px">2024/11/19 15:15</span><span class="y" style="left:373px">DOC 文档</span><span class="s" style="left:460px;width:76px">166 KB</span></div>
<div class="r2" style="top:251.5px"><i class="i idoc" style="left:16px;top:3px;width:10px;height:13px"></i><span style="left:34px">三年级数学上册</span><span style="left:116px">【专项复习】期末考点...</span><span class="d" style="left:245px">2024/11/19 15:15</span><span class="y" style="left:373px">DOC 文档</span><span class="s" style="left:460px;width:76px">440 KB</span></div>
<div class="r2" style="top:270px"><i class="i idoc" style="left:16px;top:3px;width:10px;height:13px"></i><span style="left:34px">三年级数学上册</span><span style="left:116px">【专项复习】期末考点...</span><span class="d" style="left:245px">2024/11/19 15:15</span><span class="y" style="left:373px">DOC 文档</span><span class="s" style="left:460px;width:76px">423 KB</span></div>
<div class="r2" style="top:288.4px"><i class="i idoc" style="left:16px;top:3px;width:10px;height:13px"></i><span style="left:34px">三年级数学上册</span><span style="left:116px">【专项复习】期末考点...</span><span class="d" style="left:245px">2024/11/19 15:15</span><span class="y" style="left:373px">DOC 文档</span><span class="s" style="left:460px;width:76px">430 KB</span></div>
<div class="r2" style="top:306.9px"><i class="i idoc" style="left:16px;top:3px;width:10px;height:13px"></i><span style="left:34px">三年级数学上册</span><span style="left:116px">【专项复习】期末考点...</span><span class="d" style="left:245px">2024/11/19 15:15</span><span class="y" style="left:373px">DOC 文档</span><span class="s" style="left:460px;width:76px">634 KB</span></div>
<div class="r2" style="top:325.3px"><i class="i idoc" style="left:16px;top:3px;width:10px;height:13px"></i><span style="left:34px">三年级数学上册</span><span style="left:116px">【专项复习】期末考点...</span><span class="d" style="left:245px">2024/11/19 15:15</span><span class="y" style="left:373px">DOC 文档</span><span class="s" style="left:460px;width:76px">158 KB</span></div>
<div class="r2" style="top:343.8px"><i class="i idoc" style="left:16px;top:3px;width:10px;height:13px"></i><span style="left:34px">三年级数学上册</span><span style="left:116px">【专项复习】期末考点...</span><span class="d" style="left:245px">2024/11/19 15:15</span><span class="y" style="left:373px">DOC 文档</span><span class="s" style="left:460px;width:76px">610 KB</span></div>
<div class="r2" style="top:362.2px"><i class="i idoc" style="left:16px;top:3px;width:10px;height:13px"></i><span style="left:34px">三年级数学上册</span><span style="left:116px">【专项复习】期末考点...</span><span class="d" style="left:245px">2024/11/19 15:15</span><span class="y" style="left:373px">DOC 文档</span><span class="s" style="left:460px;width:76px">1,258 KB</span></div>
<div class="r2" style="top:380.7px"><i class="i idoc" style="left:16px;top:3px;width:10px;height:13px"></i><span style="left:34px">三年级数学上册</span><span style="left:116px">【专项复习】期末考点...</span><span class="d" style="left:245px">2024/11/19 15:15</span><span class="y" style="left:373px">DOC 文档</span><span class="s" style="left:460px;width:76px">1,184 KB</span></div>
<div class="r2" style="top:399.1px"><i class="i idoc" style="left:16px;top:3px;width:10px;height:13px"></i><span style="left:34px">三年级数学上册</span><span style="left:116px">【专项复习】期末考点...</span><span class="d" style="left:245px">2024/11/19 15:15</span><span class="y" style="left:373px">DOC 文档</span><span class="s" style="left:460px;width:76px">1,430 KB</span></div>
<div class="r2" style="top:417.6px"><i class="i idoc" style="left:16px;top:3px;width:10px;height:13px"></i><span style="left:34px">三年级数学上册</span><span style="left:116px">【专项复习】期末考点...</span><span class="d" style="left:245px">2024/11/19 15:15</span><span class="y" style="left:373px">DOC 文档</span><span class="s" style="left:460px;width:76px">715 KB</span></div>
<div class="r2" style="top:436px"><i class="i idoc" style="left:16px;top:3px;width:10px;height:13px"></i><span style="left:34px">三年级数学上册</span><span style="left:116px">【专项复习】期末考点...</span><span class="d" style="left:245px">2024/11/19 15:15</span><span class="y" style="left:373px">DOC 文档</span><span class="s" style="left:460px;width:76px">756 KB</span></div>
<div class="r2" style="top:454.5px"><i class="i idoc" style="left:16px;top:3px;width:10px;height:13px"></i><span style="left:34px">三年级数学上册</span><span style="left:116px">【专项复习】期末考点...</span><span class="d" style="left:245px">2024/11/19 15:15</span><span class="y" style="left:373px">DOC 文档</span><span class="s" style="left:460px;width:76px">613 KB</span></div>
<div class="r2" style="top:473px;height:18px"><i class="i idoc" style="left:16px;top:3px;width:10px;height:13px"></i><span style="left:34px">三年级数学上册</span><span style="left:116px">【专项复习】期末考点...</span><span class="d" style="left:245px">2024/11/19 15:15</span><span class="y" style="left:373px">DOC 文档</span><span class="s" style="left:460px;width:76px">281 KB</span></div>
<div class="sb" style="left:652px;top:0;width:14px;height:492px"></div>
<div class="th" style="left:654px;top:16px;width:9px;height:268px"></div>
</div>
<div class="sb" style="left:1318px;top:508px;width:12px;height:492px;background:#e8e8e8"></div>

<!-- watermark -->
<div style="position:absolute;left:1714px;top:903px;font:40px/40px 'Liberation Sans',sans-serif;color:rgba(255,255,255,.88);white-space:nowrap">zhipinquan.com</div>
<div style="position:absolute;left:1712px;top:953px;font:35px/36px 'Liberation Sans','Noto Sans CJK SC',sans-serif;color:rgba(255,255,255,.88);white-space:nowrap">百万资源免费下载</div>
</body></html>
